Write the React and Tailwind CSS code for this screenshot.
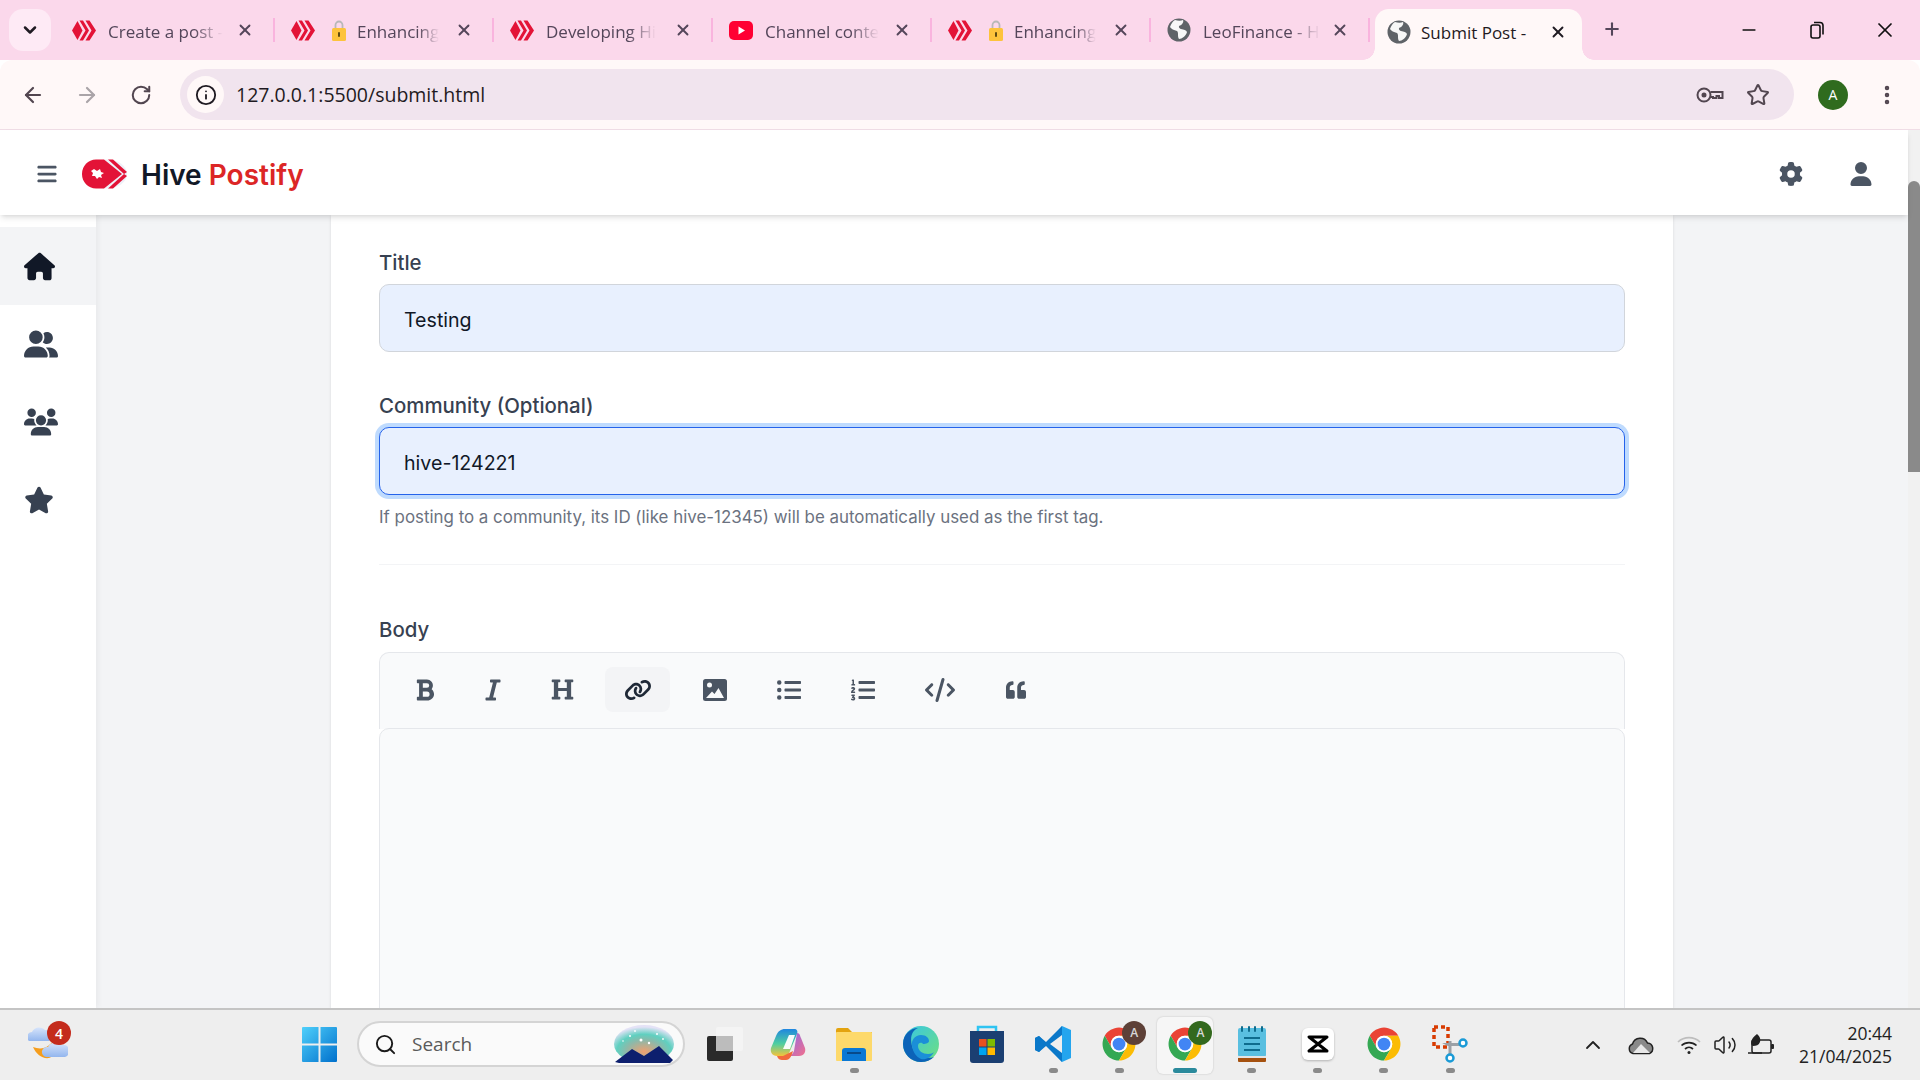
import React from 'react';
import { ChevronDown, ChevronUp, X, Plus, Minus, ArrowLeft, ArrowRight, RotateCw, Info, Star, EllipsisVertical, Search, Volume2 } from 'lucide-react';
import { FaBold, FaItalic, FaHeading, FaListUl, FaListOl, FaQuoteLeft } from 'react-icons/fa';
import { FaBars, FaGear, FaUser, FaHouse, FaUserGroup, FaUsers, FaStar, FaLink, FaCode } from 'react-icons/fa6';

function HiveIcon() {
  return (
    <svg viewBox="0 0 24 21" className="w-6 h-[21px] shrink-0" fill="#e31337">
      <polygon points="0,10.5 5.5,1 10.5,10.5 5.5,20" />
      <polygon points="7.5,0.5 11,0.5 17,10.5 11,20.5 7.5,20.5 13.5,10.5" />
      <polygon points="13.5,0.5 17.5,0.5 24,10.5 17.5,20.5 13.5,20.5 19.5,10.5" />
    </svg>
  );
}

function YoutubeIcon() {
  return (
    <svg viewBox="0 0 24 21" className="w-6 h-[21px] shrink-0">
      <rect x="0" y="1" width="24" height="19" rx="5" fill="#ff0033" />
      <polygon points="9.5,6.5 16,10.5 9.5,14.5" fill="#fff" />
    </svg>
  );
}

function GlobeIcon() {
  return (
    <svg viewBox="0 0 24 24" className="w-6 h-6 shrink-0">
      <circle cx="12" cy="12" r="11.500" fill="#5f6368" />
      <path d="M8 2c3 1 6 1 8 0 1 2-1 5-3 5.500-2 .5-1 3 1 3.500 3 .5 5 1 6 3-1 4-5 7-8 7-2-3 0-6-2-8-3-1-6-2-7-4 1-3 3-6 5-7z" fill="#fff" opacity="0.95" />
    </svg>
  );
}

function LockIcon() {
  return (
    <svg viewBox="0 0 14 22" className="w-[14px] h-[22px] shrink-0">
      <path d="M3.500 9V6a3.500 3.500 0 0 1 7 0v3" fill="none" stroke="#b8b8b8" strokeWidth="1.800" />
      <rect x="0" y="9" width="14" height="13" rx="1.500" fill="#fdc33c" />
      <rect x="6" y="13" width="2" height="5" rx="1" fill="#5f4b10" />
    </svg>
  );
}

function Tab({ icon, lock, title }) {
  return (
    <div className="w-[219px] h-full flex items-center pl-4 shrink-0">
      {icon}
      <div className="w-[118px] ml-3 flex items-center overflow-hidden">
        {lock && <div className="ml-[5px] mr-[11px] flex"><LockIcon /></div>}
        <span className="pt-[3px] whitespace-nowrap text-[17px] text-[#54465a] [mask-image:linear-gradient(to_right,black_75%,transparent_100%)] overflow-hidden">{title}</span>
      </div>
      <X className="w-[18px] h-[18px] ml-[11px] text-[#54465a] shrink-0" strokeWidth={2.500} />
      <div className="w-[2px] h-6 ml-[19px] bg-[#f9b4de] shrink-0" />
    </div>
  );
}

function KeyIcon() {
  return (
    <svg viewBox="0 0 28 20" className="w-7 h-5" fill="none" stroke="#524650" strokeWidth="2">
      <circle cx="8" cy="10" r="6.500" />
      <circle cx="8" cy="10" r="1.500" fill="#524650" />
      <path d="M14.500 7H26.500V13H23V11H20.500V13H17V12H14.500" />
    </svg>
  );
}

function RestoreIcon() {
  return (
    <svg viewBox="0 0 14 18" className="w-[14px] h-[18px]" fill="none" stroke="#111" strokeWidth="1.600">
      <rect x="1" y="4" width="9" height="13" rx="2" />
      <path d="M4 1.500h6a3 3 0 0 1 3 3v9" />
    </svg>
  );
}

function HeaderLogo() {
  return (
    <svg viewBox="0 0 45 30" className="w-[45px] h-[30px]">
      <ellipse cx="25" cy="15" rx="20" ry="14.500" fill="#eef0f8" />
      <path d="M14 0.500h8L40 15 22 29.500h-8C6 29.500 0 23 0 15S6 .5 14 .5z" fill="#e31337" />
      <path d="M26 0.500h5L45 13 42 15z" fill="#e31337" />
      <path d="M26 29.500h5L45 17 42 15z" fill="#e31337" />
      <path d="M12 10l3 2 3-2 1 3 3 1-3 2 1 3-3-1-2 2-2-3-3 0 1-3-2-2z" fill="#fff" />
    </svg>
  );
}

function ImageIcon({ className }) {
  return (
    <svg viewBox="0 0 24 24" className={className}>
      <rect x="0" y="1" width="24" height="22" rx="2.500" fill="currentColor" />
      <circle cx="6.500" cy="7" r="2.500" fill="#f9fafb" />
      <path d="M3 20L9 13.500l2.500 2.500 4-6L21 20z" fill="#f9fafb" />
    </svg>
  );
}

function ChromeIcon({ badge }) {
  return (
    <div className="relative w-9 h-9">
      <svg viewBox="0 0 48 48" className="w-9 h-9">
        <path d="M24 13H43A22 22 0 0 0 5 13L14.500 29.500A11 11 0 0 1 24 13z" fill="#ea4335" />
        <path d="M14.500 29.500L5 13A22 22 0 0 0 24 46L33.500 29.500A11 11 0 0 1 14.500 29.500z" fill="#34a853" />
        <path d="M33.500 29.500L24 46A22 22 0 0 0 43 13H24A11 11 0 0 1 33.500 29.500z" fill="#fbbc04" />
        <circle cx="24" cy="24" r="11" fill="#fff" />
        <circle cx="24" cy="24" r="8.500" fill="#4285f4" />
      </svg>
      {badge && (
        <div className={`absolute -top-[5px] -right-[9px] w-6 h-6 rounded-full flex items-center justify-center text-[12px] font-semibold text-[#d8d8d8] ${badge}`}>A</div>
      )}
    </div>
  );
}

function TaskSlot({ children, dot, active }) {
  return (
    <div className="w-[66.200px] shrink-0 flex justify-center">
      <div className={`w-[56px] h-[57px] mt-[7px] flex flex-col items-center pt-[9px] rounded-md ${active ? 'bg-[#f6f6f6] shadow-[0_0_2px_rgba(0,0,0,0.2)]' : ''}`}>
        <div className="w-9 h-9 flex items-center justify-center">{children}</div>
        {dot && <div className={`mt-[6px] h-[5px] rounded-full ${active ? 'w-6 bg-[#2b8a9c]' : 'w-[9px] bg-[#8a8a8a]'}`} />}
      </div>
    </div>
  );
}

function WeatherIcon() {
  return (
    <svg viewBox="0 0 40 40" className="w-10 h-10">
      <defs>
        <linearGradient id="cloud" x1="0" y1="0" x2="0" y2="1">
          <stop offset="0" stopColor="#d6e4fb" />
          <stop offset="1" stopColor="#93b6ee" />
        </linearGradient>
      </defs>
      <path d="M5 26c5 2 11 2 15-1 4-3 6-6 7-10l7-1c1 9-3 20-13 23-7 1-13-4-16-11z" fill="#f59d1c" />
      <path d="M1 20a5 5 0 0 1 3-9 8 8 0 0 1 13-2 6 6 0 0 1 4 11z" fill="url(#cloud)" />
      <path d="M18 36a5 5 0 0 1 2-10 8 8 0 0 1 13-2 6 6 0 0 1 4 12z" fill="url(#cloud)" />
    </svg>
  );
}

function WindowsIcon() {
  return (
    <svg viewBox="0 0 35 35" className="w-[35px] h-[35px]">
      <defs>
        <linearGradient id="win" x1="0" y1="0" x2="1" y2="1">
          <stop offset="0" stopColor="#4fd0fb" />
          <stop offset="1" stopColor="#0070cc" />
        </linearGradient>
      </defs>
      <path d="M1 0h15.500v16.500H0V1a1 1 0 0 1 1-1zM18.500 0H34a1 1 0 0 1 1 1v15.500H18.500zM0 18.500h16.500V35H1a1 1 0 0 1-1-1zM18.500 18.500H35V34a1 1 0 0 1-1 1H18.500z" fill="url(#win)" />
    </svg>
  );
}

function SearchArt() {
  return (
    <svg viewBox="0 0 62 38" className="w-[62px] h-[38px]">
      <defs>
        <radialGradient id="glow" cx="0.500" cy="0.700" r="0.650">
          <stop offset="0" stopColor="#f0a070" />
          <stop offset="0.450" stopColor="#8fb8a8" />
          <stop offset="0.700" stopColor="#5fd0c0" />
          <stop offset="1" stopColor="#e4e2f6" />
        </radialGradient>
      </defs>
      <ellipse cx="31" cy="19" rx="30" ry="19" fill="url(#glow)" />
      <path d="M2 37L19 24l12 7 15-10 14 14-3 3H6z" fill="#0d1f6e" />
      <g fill="#fff">
        <circle cx="28" cy="15" r="1.500" />
        <circle cx="36" cy="18" r="1.200" />
        <circle cx="17" cy="11" r="1" />
        <circle cx="44" cy="9" r="1" />
        <circle cx="22" cy="6" r="0.900" />
        <circle cx="50" cy="14" r="0.900" />
        <circle cx="10" cy="16" r="0.800" />
      </g>
    </svg>
  );
}

function TaskViewIcon() {
  return (
    <svg viewBox="0 0 36 34" className="w-9 h-[34px] translate-x-[3px]">
      <rect x="0" y="9" width="26" height="25" rx="2" fill="#2a2a2a" />
      <rect x="9" y="0" width="27" height="24" rx="2" fill="#f4f4f4" />
      <rect x="9" y="9" width="17" height="15" fill="#bcbcbc" />
    </svg>
  );
}

function CopilotIcon() {
  return (
    <svg viewBox="0 0 36 36" className="w-9 h-9">
      <defs>
        <linearGradient id="cop1" x1="0" y1="0" x2="0" y2="1">
          <stop offset="0" stopColor="#1f86e0" />
          <stop offset="0.550" stopColor="#4fcfa0" />
          <stop offset="1" stopColor="#f5c33b" />
        </linearGradient>
        <linearGradient id="cop2" x1="0" y1="0" x2="1" y2="1">
          <stop offset="0" stopColor="#8e6ae8" />
          <stop offset="1" stopColor="#f2708c" />
        </linearGradient>
      </defs>
      <path d="M15 3h9c3 0 4 2 3 5l-7 17c-1 3-3 5-7 5H7c-5 0-7-4-6-8l5-12c2-5 5-7 9-7z" fill="url(#cop1)" />
      <path d="M27 7c3 0 3 3 4 5l4 10c1 4-1 8-6 8H19c3-1 4-3 5-5z" fill="url(#cop2)" />
      <path d="M13 30l10-5c-1 4-3 9-7 9h-4c-2 0-4-1-5-4z" fill="#f26a3d" />
      <path d="M19 9h6l-5 14h-7z" fill="#fff" opacity="0.950" />
    </svg>
  );
}

function ExplorerIcon() {
  return (
    <svg viewBox="0 0 36 34" className="w-9 h-[34px]">
      <path d="M0 3a2 2 0 0 1 2-2h10l4 4h20v6H0z" fill="#e3a30f" />
      <rect x="0" y="5" width="36" height="29" rx="1" fill="#fdd96b" />
      <path d="M6 34V24a3 3 0 0 1 3-3h18a3 3 0 0 1 3 3v10z" fill="#0a78d4" />
      <rect x="11" y="25" width="14" height="2" fill="#084a8a" />
    </svg>
  );
}

function EdgeIcon() {
  return (
    <svg viewBox="0 0 36 36" className="w-9 h-9">
      <defs>
        <linearGradient id="edge1" x1="0" y1="0" x2="1" y2="1">
          <stop offset="0" stopColor="#36c6e8" />
          <stop offset="1" stopColor="#6fe07c" />
        </linearGradient>
      </defs>
      <circle cx="18" cy="18" r="18" fill="url(#edge1)" />
      <path d="M0 18C0 8 8 2 15 2 8 5 7 12 9 20c2 9 12 14 22 11-3 3-8 5-13 5C8 36 0 28 0 18z" fill="#0c63b8" />
      <path d="M9 20c-1-6 3-11 9-11 5 0 8 3 8 6 0 2-3 3-6 3-1-2-5-2-5 2 0 5 5 8 10 8 3 0 5-1 6-2-3 6-9 8-13 7-5-2-8-7-9-13z" fill="#1b8fd8" />
    </svg>
  );
}

function StoreIcon() {
  return (
    <svg viewBox="0 0 36 38" className="w-9 h-[38px]">
      <path d="M9 8V2h18v6" fill="none" stroke="#2fc4f2" strokeWidth="2.500" />
      <path d="M1 6h34v29a3 3 0 0 1-3 3H4a3 3 0 0 1-3-3z" fill="#1b3f72" />
      <rect x="10" y="14" width="7.500" height="7.500" fill="#e8501f" />
      <rect x="18.500" y="14" width="7.500" height="7.500" fill="#7fba00" />
      <rect x="10" y="22.500" width="7.500" height="7.500" fill="#00a4ef" />
      <rect x="18.500" y="22.500" width="7.500" height="7.500" fill="#ffb900" />
    </svg>
  );
}

function VsCodeIcon() {
  return (
    <svg viewBox="0 0 36 36" className="w-9 h-9">
      <path d="M27 0l9 4v28l-9 4L11 19z" fill="#24a5ee" />
      <path d="M27 0v36L11 20 4 26l-4-2v-12l4-2 7 6z" fill="#0a78c9" />
      <path d="M27 9L15 18l12 9zM0 12l4-2 7 8-7 8-4-2 5-6z" fill="#0a78c9" />
      <path d="M27 9v18l-12-9z" fill="#eee" />
    </svg>
  );
}

function NotepadIcon() {
  return (
    <svg viewBox="0 0 28 36" className="w-7 h-9">
      <rect x="0" y="2" width="28" height="29" rx="2" fill="#59bfe0" />
      <rect x="0" y="31" width="28" height="5" rx="1" fill="#a5510f" />
      <rect x="0" y="30" width="28" height="2" fill="#e4e4e4" />
      <rect x="6" y="11" width="16" height="2" fill="#0e6c8e" />
      <rect x="6" y="17" width="16" height="2" fill="#0e6c8e" />
      <rect x="6" y="23" width="16" height="2" fill="#0e6c8e" />
      <g fill="#0e6c8e">
        <rect x="3" y="0" width="2" height="6" rx="1" />
        <rect x="10" y="0" width="2" height="6" rx="1" />
        <rect x="16" y="0" width="2" height="6" rx="1" />
        <rect x="23" y="0" width="2" height="6" rx="1" />
      </g>
    </svg>
  );
}

function CapCutIcon() {
  return (
    <svg viewBox="0 0 32 32" className="w-8 h-8 drop-shadow-[0_1px_1px_rgba(0,0,0,0.25)]">
      <rect x="0" y="0" width="32" height="32" rx="6" fill="#fff" />
      <path d="M7 9h18L7 23h18z" fill="none" stroke="#000" strokeWidth="3" strokeLinejoin="round" />
    </svg>
  );
}

function SnipIcon() {
  return (
    <svg viewBox="0 0 36 38" className="w-9 h-[38px]">
      <rect x="2" y="2" width="14" height="20" fill="none" stroke="#d83b01" strokeWidth="3.500" strokeDasharray="4 3" />
      <path d="M10 18h20v3H16z" fill="#9aa0a6" />
      <path d="M18 16v14" stroke="#9aa0a6" strokeWidth="3" />
      <circle cx="31" cy="18" r="3.500" fill="#fff" stroke="#1a9ad6" strokeWidth="2.500" />
      <circle cx="18" cy="33" r="3.500" fill="#fff" stroke="#1a9ad6" strokeWidth="2.500" />
    </svg>
  );
}

function OneDriveIcon() {
  return (
    <svg viewBox="0 0 28 20" className="w-7 h-5">
      <path d="M6 18.500a5 5 0 0 1-.5-9.500 8 8 0 0 1 15-1 5.500 5.500 0 0 1 2 10.500z" fill="#8a8a8a" stroke="#222" strokeWidth="1.500" />
      <path d="M6 18L14 9l9 9z" fill="#e8e8e8" />
    </svg>
  );
}

function WifiIcon() {
  return (
    <svg viewBox="0 0 24 20" className="w-6 h-5" fill="none" stroke="#222" strokeWidth="1.700">
      <path d="M1 7a16 16 0 0 1 22 0" stroke="#bdbdbd" />
      <path d="M4.500 10.500a11 11 0 0 1 15 0" />
      <path d="M8 14a6 6 0 0 1 8 0" />
      <circle cx="12" cy="17.500" r="1.500" fill="#222" stroke="none" />
    </svg>
  );
}

function BatteryIcon() {
  return (
    <svg viewBox="0 0 26 22" className="w-[26px] h-[22px]">
      <rect x="4" y="6" width="19" height="13" rx="2" fill="none" stroke="#222" strokeWidth="1.500" />
      <rect x="23" y="10" width="3" height="5" rx="1" fill="#222" />
      <path d="M9 0c2 2 4 4 3 8-1 3-4 4-7 4C2 11 2 5 9 0z" fill="#222" />
      <path d="M0 19h14" stroke="#222" strokeWidth="1.500" />
    </svg>
  );
}

function Field({ label, value, focused, mt }) {
  return (
    <div className={mt}>
      <div className="text-[20.400px] leading-7 font-medium text-[#374151] mb-[7px]">{label}</div>
      <div className={`h-[68px] rounded-[10px] bg-[#e8f0fe] flex items-center px-6 pt-[6px] text-[19.600px] text-[#111827] border ${focused ? 'border-[#2563eb] ring-[4px] ring-[#bfdbfe]' : 'border-[#d1d5db]'}`}>
        {value}
      </div>
    </div>
  );
}

const mdeButtons = [
  { icon: FaBold, size: 'w-[20px] h-[24px]', w: 'w-[54px]' },
  { icon: FaItalic, size: 'w-[20px] h-[24px]', w: 'w-[54px]' },
  { icon: FaHeading, size: 'w-[23px] h-[23px]', w: 'w-[57px]' },
  { icon: FaLink, size: 'w-[28px] h-[22px]', w: 'w-[65px]', active: true },
  { icon: ImageIcon, size: 'w-[24px] h-[24px]', w: 'w-[61px]' },
  { icon: FaListUl, size: 'w-[24px] h-[24px]', w: 'w-[60px]' },
  { icon: FaListOl, size: 'w-[24px] h-[24px]', w: 'w-[60px]' },
  { icon: FaCode, size: 'w-[30px] h-[24px]', w: 'w-[66px]' },
  { icon: FaQuoteLeft, size: 'w-[20px] h-[20px]', w: 'w-[58px]' },
];

export default function App() {
  return (
    <div className="w-full h-screen flex flex-col overflow-hidden bg-white font-['Open_Sans',sans-serif]">
      {/* Browser tab strip */}
      <div className="h-[60px] shrink-0 bg-[#fbd8eb] flex">
        <div className="w-[42px] h-[42px] ml-[9px] mt-[9px] mr-[5px] rounded-[14px] bg-[#feeaf5] flex items-center justify-center shrink-0">
          <ChevronDown className="w-5 h-5 text-[#1f1a22]" strokeWidth={3} />
        </div>
        <Tab icon={<HiveIcon />} title="Create a post -" />
        <Tab icon={<HiveIcon />} lock title="Enhancing" />
        <Tab icon={<HiveIcon />} title="Developing Hi" />
        <Tab icon={<YoutubeIcon />} title="Channel conte" />
        <Tab icon={<HiveIcon />} lock title="Enhancing" />
        <Tab icon={<GlobeIcon />} title="LeoFinance - H" />
        <div className="relative ml-[5px] mt-[9px] w-[207px] h-[51px] bg-[#fff8f8] rounded-t-[14px] flex items-center pl-3 pb-[6px] shrink-0">
          <div className="absolute -left-3 bottom-0 w-3 h-3 bg-[radial-gradient(circle_at_0_0,transparent_11.500px,#fff8f8_12px)]" />
          <div className="absolute -right-3 bottom-0 w-3 h-3 bg-[radial-gradient(circle_at_100%_0,transparent_11.500px,#fff8f8_12px)]" />
          <GlobeIcon />
          <span className="w-[112px] ml-[10px] pt-[3px] whitespace-nowrap overflow-hidden text-[17px] text-[#1f1a22]">Submit Post -</span>
          <X className="w-[18px] h-[18px] ml-[16px] text-[#1f1a22]" strokeWidth={2.500} />
        </div>
        <div className="ml-[20px] h-[60px] flex items-center pb-[2px]">
          <Plus className="w-5 h-5 text-[#54465a]" strokeWidth={2.500} />
        </div>
        <div className="ml-auto flex h-[60px] pr-[1px] items-center">
          <div className="w-[68px] flex justify-center"><Minus className="w-5 h-5 text-[#111]" /></div>
          <div className="w-[68px] flex justify-center"><RestoreIcon /></div>
          <div className="w-[68px] flex justify-center"><X className="w-6 h-6 text-[#111]" strokeWidth={1.700} /></div>
        </div>
      </div>

      {/* Browser address bar */}
      <div className="h-[70px] shrink-0 bg-[#fff8f8] rounded-t-[12px] border-b border-[#f0dde6] flex items-center pl-[6px]">
        <div className="w-[54px] flex justify-center"><ArrowLeft className="w-6 h-6 text-[#524650]" strokeWidth={2.200} /></div>
        <div className="w-[54px] flex justify-center"><ArrowRight className="w-6 h-6 text-[#aaa4a8]" strokeWidth={2.200} /></div>
        <div className="w-[54px] flex justify-center"><RotateCw className="w-[22px] h-[22px] text-[#524650]" strokeWidth={2.200} /></div>
        <div className="ml-3 flex-1 h-[51px] rounded-full bg-[#f1e4ee] flex items-center pl-[7px] pr-6">
          <div className="w-[37px] h-[37px] rounded-full bg-[#fff8f8] flex items-center justify-center">
            <Info className="w-[22px] h-[22px] text-[#1f1a22]" strokeWidth={2} />
          </div>
          <span className="ml-3 text-[19.500px] text-[#1f1a22]">127.0.0.1:5500/submit.html</span>
          <div className="ml-auto"><KeyIcon /></div>
          <Star className="ml-[22px] w-6 h-6 text-[#524650]" strokeWidth={2} />
        </div>
        <div className="ml-6 w-[30px] h-[30px] rounded-full bg-[#2f6b1e] flex items-center justify-center text-white text-[14px]">A</div>
        <EllipsisVertical className="ml-[27px] mr-[21px] w-6 h-6 text-[#524650]" strokeWidth={2.500} />
      </div>

      {/* Page */}
      <div className="flex-1 min-h-0 flex">
        <div className="flex-1 min-w-0 flex flex-col font-['Inter',sans-serif]">
          <header className="relative z-10 h-[85px] shrink-0 bg-white shadow-md flex items-center pl-9 pr-[35px] pt-[2px]">
            <FaBars className="w-[22px] h-[22px] text-[#4b5563]" />
            <div className="ml-6"><HeaderLogo /></div>
            <div className="ml-[14px] pt-[2px] text-[28px] font-semibold">
              <span className="text-[#111827]">Hive</span> <span className="text-[#dc2626]">Postify</span>
            </div>
            <FaGear className="ml-auto w-6 h-6 text-[#4b5563]" />
            <FaUser className="ml-[46px] w-6 h-6 text-[#4b5563]" />
          </header>
          <div className="flex-1 min-h-0 flex overflow-hidden">
            <aside className="w-[96px] shrink-0 bg-white pt-3 shadow-[2px_0_6px_rgba(0,0,0,0.05)] relative">
              <div className="h-[78px] bg-gray-100 flex items-center pl-6"><FaHouse className="w-[31px] h-[31px] text-[#111827]" /></div>
              <div className="h-[78px] flex items-center pl-6"><FaUserGroup className="w-[34px] h-[34px] text-[#374151]" /></div>
              <div className="h-[78px] flex items-center pl-6"><FaUsers className="w-[34px] h-[34px] text-[#374151]" /></div>
              <div className="h-[78px] flex items-center pl-6"><FaStar className="w-[30px] h-[30px] text-[#374151]" /></div>
            </aside>
            <main className="flex-1 min-w-0 bg-gray-100">
              <div className="w-[1342px] mx-auto bg-white h-full px-[48px] pt-[34px] shadow-sm">
                <Field label="Title" value="Testing" />
                <Field label="Community (Optional)" value="hive-124221" focused mt="mt-[40px]" />
                <p className="mt-[10px] text-[16.900px] leading-6 text-[#6b7280]">If posting to a community, its ID (like hive-12345) will be automatically used as the first tag.</p>
                <div className="mt-[35px] h-px bg-[#f3f4f6]" />
                <div className="mt-[51px] text-[20.400px] leading-7 font-medium text-[#374151] mb-2">Body</div>
                <div className="h-[77px] bg-[#f9fafb] border border-b-0 border-[#e5e7eb] rounded-t-[10px] flex items-start pt-[14px] pl-[18px] gap-[14px]">
                  {mdeButtons.map((b, i) => {
                    const Icon = b.icon;
                    return (
                      <div key={i} className={`h-[45px] rounded-lg flex items-center justify-center ${b.w} ${b.active ? 'bg-gray-100 text-[#1f2937]' : 'text-[#4b5563]'}`}>
                        <Icon className={b.size} />
                      </div>
                    );
                  })}
                </div>
                <div className="h-[400px] -mt-px bg-[#f9fafb] border border-[#e5e7eb] rounded-t-[10px]" />
              </div>
            </main>
          </div>
        </div>
        <div className="w-[12px] shrink-0 bg-[#f1f1f1] pt-[51px]">
          <div className="h-[291px] bg-[#8a8a8a] rounded-t-[6px]" />
        </div>
      </div>

      {/* Windows taskbar */}
      <div className="h-[72px] shrink-0 bg-[#eeeeee] border-t-2 border-[#c4c4c4] flex items-start relative font-['Open_Sans',sans-serif]">
        <div className="relative ml-[18px] w-[60px] mt-[11px] flex justify-center">
          <WeatherIcon />
          <div className="absolute top-0 left-[29px] w-6 h-6 rounded-full bg-[#c42b1c] text-white text-[14px] font-semibold flex items-center justify-center">4</div>
        </div>
        <div className="ml-[224px] mt-[17px]"><WindowsIcon /></div>
        <div className="ml-[20px] mt-[11px] w-[328px] h-[46px] rounded-full bg-[#fafafa] border-2 border-[#d4d4d4] flex items-center pl-[15px] pr-2">
          <Search className="w-[23px] h-[23px] text-[#1a1a1a]" strokeWidth={2} />
          <span className="ml-[15px] text-[19px] text-[#5a5a5a]">Search</span>
          <div className="ml-auto"><SearchArt /></div>
        </div>
        <div className="ml-[4px] flex">
          <TaskSlot><TaskViewIcon /></TaskSlot>
          <TaskSlot><CopilotIcon /></TaskSlot>
          <TaskSlot dot><ExplorerIcon /></TaskSlot>
          <TaskSlot><EdgeIcon /></TaskSlot>
          <TaskSlot><StoreIcon /></TaskSlot>
          <TaskSlot dot><VsCodeIcon /></TaskSlot>
          <TaskSlot dot><ChromeIcon badge="bg-[#5d4037]" /></TaskSlot>
          <TaskSlot dot active><ChromeIcon badge="bg-[#33691e]" /></TaskSlot>
          <TaskSlot dot><NotepadIcon /></TaskSlot>
          <TaskSlot dot><CapCutIcon /></TaskSlot>
          <TaskSlot dot><ChromeIcon /></TaskSlot>
          <TaskSlot dot><SnipIcon /></TaskSlot>
        </div>
        <div className="ml-auto pr-[28px] h-full flex items-center text-[#222]">
          <ChevronUp className="w-6 h-6" strokeWidth={1.800} />
          <div className="ml-[22px]"><OneDriveIcon /></div>
          <div className="ml-[22px]"><WifiIcon /></div>
          <Volume2 className="ml-3 w-6 h-6" strokeWidth={1.500} />
          <div className="ml-[11px]"><BatteryIcon /></div>
          <div className="ml-[18px] text-right text-[17.500px] leading-[23px] w-[100px] whitespace-nowrap">
            <div>20:44</div>
            <div>21/04/2025</div>
          </div>
        </div>
      </div>
    </div>
  );
}
